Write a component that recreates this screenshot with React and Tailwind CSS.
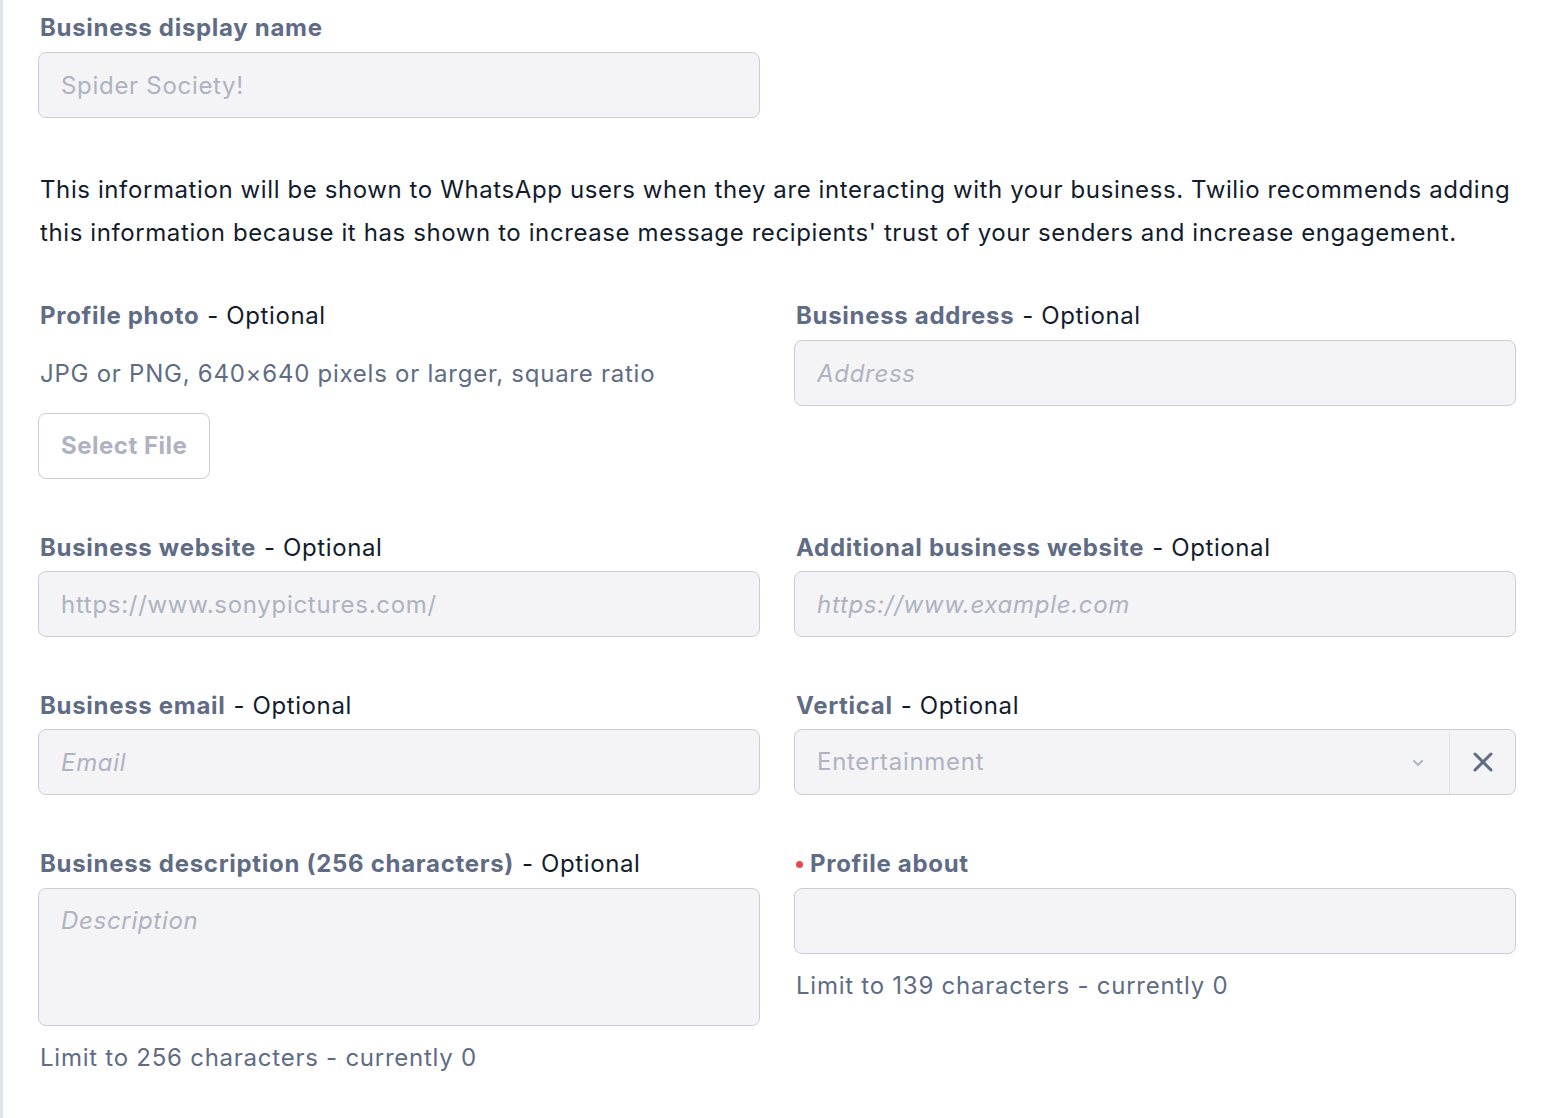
import React from 'react';

const inputCls =
  'block w-full h-[66px] rounded-[8px] border border-[#cacdd8] bg-[#f4f4f6] px-[22px] text-[24px] tracking-[0.7px] text-[#121c2d] placeholder:italic placeholder:text-[#aeb2c1] focus:outline-none';

function Label({ children, optional, required }) {
  return (
    <div className="flex items-center h-[32px] pl-[2px] text-[24px] leading-[32px]">
      {required && <span className="w-[7px] h-[7px] rounded-full bg-[#e8484a] mr-[7px]" />}
      <span className="font-bold tracking-[0.7px] text-[#606b85]">{children}</span>
      {optional && <span className="text-[#121c2d] tracking-[0.6px] ml-[8px]">- Optional</span>}
    </div>
  );
}

function Help({ children, className = '' }) {
  return <p className={`text-[24px] leading-[32px] tracking-[0.75px] text-[#606b85] ${className}`}>{children}</p>;
}

export default function App() {
  return (
    <div
      className="min-h-screen bg-white border-l-[3px] border-[#e1e3ea] pl-[35px] pr-[40px] pt-[12px] pb-[20px]"
      style={{ fontFamily: 'Inter, "Noto Sans", sans-serif' }}
    >
      {/* Display name */}
      <div className="w-[722px]">
        <Label>Business display name</Label>
        <input disabled value="Spider Society!" readOnly className={`${inputCls} mt-[8px] !text-[#aeb2c1]`} />
      </div>

      <p className="mt-[50px] text-[24px] leading-[43px] tracking-[0.6px] text-[#121c2d] pl-[2px]">
        This information will be shown to WhatsApp users when they are interacting with your business. Twilio recommends adding
        this information because it has shown to increase message recipients' trust of your senders and increase engagement.
      </p>

      <div className="grid grid-cols-2 gap-x-[34px] gap-y-[53px] mt-[46px] items-start">
        {/* Profile photo */}
        <div>
          <Label optional>Profile photo</Label>
          <Help className="mt-[26px] pl-[2px]">JPG or PNG, 640×640 pixels or larger, square ratio</Help>
          <button className="mt-[23px] h-[66px] px-[22px] rounded-[8px] border border-[#cacdd8] bg-white text-[24px] tracking-[0.5px] font-bold text-[#aeb2c1]">
            Select File
          </button>
        </div>

        {/* Address */}
        <div>
          <Label optional>Business address</Label>
          <input placeholder="Address" className={`${inputCls} mt-[8px]`} />
        </div>

        {/* Website */}
        <div>
          <Label optional>Business website</Label>
          <input disabled readOnly value="https://www.sonypictures.com/" className={`${inputCls} mt-[7px] !text-[#aeb2c1]`} />
        </div>

        <div>
          <Label optional>Additional business website</Label>
          <input placeholder="https://www.example.com" className={`${inputCls} mt-[7px]`} />
        </div>

        {/* Email / Vertical */}
        <div>
          <Label optional>Business email</Label>
          <input placeholder="Email" className={`${inputCls} mt-[7px]`} />
        </div>

        <div>
          <Label optional>Vertical</Label>
          <div className="mt-[7px] flex h-[66px] rounded-[8px] border border-[#cacdd8] bg-[#f4f4f6]">
            <div className="flex-1 flex items-center pl-[22px] pr-[24px]">
              <span className="flex-1 text-[24px] tracking-[0.7px] text-[#aeb2c1]">Entertainment</span>
              <svg width="14" height="14" viewBox="0 0 14 14" fill="none" className="mt-[2px]">
                <path d="M3 5l4 4 4-4" stroke="#aeb2c1" strokeWidth="2" strokeLinecap="round" strokeLinejoin="round" />
              </svg>
            </div>
            <div className="w-[66px] border-l border-[#e1e3ea] flex items-center justify-center">
              <svg width="22" height="22" viewBox="0 0 22 22" fill="none">
                <path d="M3 3l16 16M19 3L3 19" stroke="#606b85" strokeWidth="3" strokeLinecap="round" />
              </svg>
            </div>
          </div>
        </div>

        {/* Description / About */}
        <div>
          <Label optional>Business description (256 characters)</Label>
          <textarea
            placeholder="Description"
            className="mt-[8px] block w-full h-[138px] resize-none rounded-[8px] border border-[#cacdd8] bg-[#f4f4f6] px-[22px] pt-[16px] text-[24px] leading-[32px] tracking-[0.7px] placeholder:italic placeholder:text-[#aeb2c1] focus:outline-none"
          />
          <Help className="mt-[16px] pl-[2px]">Limit to 256 characters - currently 0</Help>
        </div>

        <div>
          <Label required>Profile about</Label>
          <input className={`${inputCls} mt-[8px]`} />
          <Help className="mt-[16px] pl-[2px]">Limit to 139 characters - currently 0</Help>
        </div>
      </div>
    </div>
  );
}
